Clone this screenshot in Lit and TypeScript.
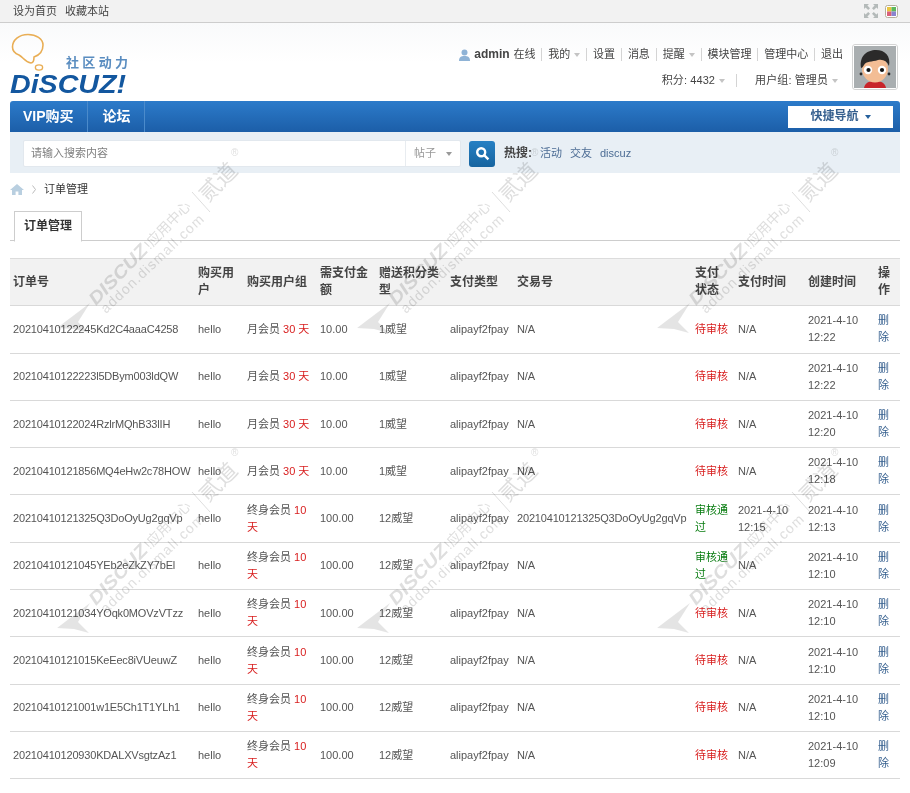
import { LitElement, html, css, svg } from "lit";
import { customElement } from "lit/decorators.js";

interface Row { id: string; group: string; days: string; pay: string; gift: string; trade: string; ok: boolean; paid: string; made: string; }

const rows: Row[] = [
  { id: "20210410122245Kd2C4aaaC4258", group: "月会员", days: "30 天", pay: "10.00", gift: "1威望", trade: "N/A", ok: false, paid: "N/A", made: "2021-4-10 12:22" },
  { id: "20210410122223l5DBym003ldQW", group: "月会员", days: "30 天", pay: "10.00", gift: "1威望", trade: "N/A", ok: false, paid: "N/A", made: "2021-4-10 12:22" },
  { id: "20210410122024RzlrMQhB33lIH", group: "月会员", days: "30 天", pay: "10.00", gift: "1威望", trade: "N/A", ok: false, paid: "N/A", made: "2021-4-10 12:20" },
  { id: "20210410121856MQ4eHw2c78HOW", group: "月会员", days: "30 天", pay: "10.00", gift: "1威望", trade: "N/A", ok: false, paid: "N/A", made: "2021-4-10 12:18" },
  { id: "20210410121325Q3DoOyUg2gqVp", group: "终身会员", days: "10 天", pay: "100.00", gift: "12威望", trade: "20210410121325Q3DoOyUg2gqVp", ok: true, paid: "2021-4-10 12:15", made: "2021-4-10 12:13" },
  { id: "20210410121045YEb2eZkZY7bEl", group: "终身会员", days: "10 天", pay: "100.00", gift: "12威望", trade: "N/A", ok: true, paid: "N/A", made: "2021-4-10 12:10" },
  { id: "20210410121034YOqk0MOVzVTzz", group: "终身会员", days: "10 天", pay: "100.00", gift: "12威望", trade: "N/A", ok: false, paid: "N/A", made: "2021-4-10 12:10" },
  { id: "20210410121015KeEec8iVUeuwZ", group: "终身会员", days: "10 天", pay: "100.00", gift: "12威望", trade: "N/A", ok: false, paid: "N/A", made: "2021-4-10 12:10" },
  { id: "20210410121001w1E5Ch1T1YLh1", group: "终身会员", days: "10 天", pay: "100.00", gift: "12威望", trade: "N/A", ok: false, paid: "N/A", made: "2021-4-10 12:10" },
  { id: "20210410120930KDALXVsgtzAz1", group: "终身会员", days: "10 天", pay: "100.00", gift: "12威望", trade: "N/A", ok: false, paid: "N/A", made: "2021-4-10 12:09" },
];

const widths = [185, 49, 73, 59, 71, 67, 178, 43, 70, 70, 25];

const tile = svg`
  <g class="wm">
    <polygon points="57,328 90,303 78,322 89,333 74,329"></polygon>
    <text class="wm-a" transform="translate(96,306) rotate(-46)" textLength="76" lengthAdjust="spacingAndGlyphs">DISCUZ</text>
    <text class="wm-b" transform="translate(150,250) rotate(-46)">!应用中心</text>
    <text class="wm-c" transform="translate(106,314) rotate(-43.5)">addon.dismall.com</text>
    <line x1="192" y1="192" x2="210" y2="212"></line>
    <text class="wm-d" transform="translate(208,203) rotate(-45)">贰道</text>
    <text class="wm-r" x="231" y="156">®</text>
  </g>`;

@customElement("app-root")
export class AppRoot extends LitElement {
  static styles = css`
    :host { display: block; position: relative; width: 910px; min-height: 793px; background: #fff; overflow: hidden;
      font: 11px/17px "Liberation Sans", "Noto Sans CJK SC", sans-serif; color: #444; }
    a { color: inherit; text-decoration: none; }
    .top { height: 22px; background: #f2f2f2; border-bottom: 1px solid #cdcdcd; padding: 0 10px 0 13px;
      display: flex; align-items: center; gap: 8px; color: #444; box-sizing: content-box; }
    .top .icons { margin-left: auto; display: flex; align-items: center; gap: 7px; padding-right: 2px; }
    .head { height: 78px; display: flex; justify-content: space-between; padding: 0 12px 0 10px;
      background: linear-gradient(#f9fafb, #fff 40px); }
    .logo { display: block; margin-top: 10px; }
    .user { display: flex; gap: 9px; align-items: flex-start; padding-top: 21px; }
    .links { display: flex; flex-direction: column; align-items: flex-end; }
    .line1 { display: flex; align-items: center; gap: 5.9px; height: 21px; color: #444; }
    .line2 { display: flex; align-items: center; height: 21px; padding-top: 5px; margin-right: 5px; color: #444; letter-spacing: .1px; }
    .line1 b { color: #444; font-size: 12px; margin-left: -2px; margin-right: -2px; }
    .sep { width: 1px; height: 13px; background: #d4d4d4; }
    .line2 .sep { margin: 0 18px 0 11px; }
    .caret { display: inline-block; width: 0; height: 0; border: 3px solid transparent; border-top: 4px solid #c4c4c4; border-bottom: 0; margin-left: 4px; }
    .has { display: flex; align-items: center; }
    .avatar { display: block; width: 46px; height: 46px; border: 1px solid #d4d4d4; border-radius: 3px; background: #fff; padding: 1px; box-sizing: border-box; }
    .nav { margin: 0 10px; height: 31px; border-radius: 3px 3px 0 0; background: linear-gradient(#2c7bca, #1c5ea8);
      display: flex; align-items: center; color: #fff; font-weight: bold; font-size: 14px; position: relative; }
    .nav a { height: 100%; display: flex; align-items: center; border-right: 1px solid #4b8bcb; }
    .nav .vip { padding: 0 13px; }
    .nav .forum { padding: 0 13px 0 15px; }
    .quick { margin-left: auto; margin-right: 7px; width: 105px; height: 22px; background: #fff; color: #36608f; font-size: 12px;
      display: flex; align-items: center; justify-content: center; gap: 6px; }
    .quick i { width: 0; height: 0; border: 3.5px solid transparent; border-top: 4px solid #26609c; border-bottom: 0; }
    .search { margin: 0 10px; height: 41px; box-sizing: border-box; padding: 2px 0 0 13px; background: #e8eff5; display: flex; align-items: center; }
    .box { width: 438px; height: 27px; background: #fff; border: 1px solid #e2e8ee; box-sizing: border-box; border-radius: 2px;
      display: flex; align-items: center; color: #808080; }
    .box .ph { flex: 1; padding-left: 7px; }
    .box .sel { width: 55px; height: 100%; border-left: 1px solid #e8ecf0; display: flex; align-items: center; padding-left: 8px; box-sizing: border-box; color: #999; gap: 10px; }
    .box .sel i { width: 0; height: 0; border: 3px solid transparent; border-top: 4px solid #999; border-bottom: 0; }
    .go { width: 26px; height: 26px; margin-left: 8px; border-radius: 3px; background: linear-gradient(#2680c4, #17649f); display: flex; align-items: center; justify-content: center; }
    .hot { margin-left: 9px; display: flex; gap: 8px; color: #4d6d95; }
    .hot b { color: #444; font-size: 12px; }
    .crumb { height: 32px; padding: 0 10px; display: flex; align-items: center; color: #333; }
    .crumb .chev { margin: 0 8px; display: block; }
    .tabs { margin: 6px 10px 0; border-bottom: 1px solid #cdcdcd; padding-left: 4px; box-sizing: content-box; height: 29px; }
    .tab { display: inline-flex; align-items: center; justify-content: center; width: 66px; height: 29px; background: #fff; border: 1px solid #cdcdcd; border-bottom: 1px solid #fff;
      font-weight: bold; font-size: 12px; color: #333; position: relative; }
    table { margin: 17px 10px 0; width: 890px; border-collapse: collapse; table-layout: fixed; position: relative; }
    th, td { padding: 0 3px; text-align: left; vertical-align: middle; border-bottom: 1px solid #d9d9d9; font-weight: normal; }
    thead th { height: 46.3px; background: #f2f2f2; border-top: 1px solid #dcdcdc; font-weight: bold; font-size: 12px; color: #444; }
    tbody td { height: 46.3px; color: #555; }
    .nw { white-space: nowrap; }
    .code { letter-spacing: -.18px; }
    .red { color: #d81e1e; }
    .green { color: #0a7d12; }
    .link { color: #36608f; }
    .overlay { position: absolute; left: 0; top: 0; width: 910px; height: 793px; pointer-events: none; opacity: .8; mix-blend-mode: multiply; }
    .wm polygon { fill: #dedede; }
    .wm text { fill: #d6d6d6; font-family: "Liberation Sans", "Noto Sans CJK SC", sans-serif; }
    .wm .wm-a { font-size: 18px; font-weight: bold; font-style: italic; }
    .wm .wm-b { font-size: 14px; }
    .wm .wm-c { font-size: 14px; letter-spacing: 1.2px; }
    .wm .wm-d { font-size: 22px; }
    .wm .wm-r { font-size: 10px; }
    .wm line { stroke: #d6d6d6; stroke-width: 1; }
  `;

  private logo() {
    return html`<svg class="logo" width="122" height="66" viewBox="0 0 122 66">
      <path d="M18 1.500 C9 1.500 2.500 7 2.500 14 C2.500 19 6 21 9 22 C13 24 15 29 21 30 C24 30 24 27 24 24 C30 22 33 17 33 12 C33 5.500 26 1.500 18 1.500 Z" fill="none" stroke="#e9ae55" stroke-width="1.6"></path>
      <ellipse cx="29" cy="34.500" rx="3.600" ry="2.600" fill="none" stroke="#e9ae55" stroke-width="1.400"></ellipse>
      <text x="56" y="34" font-size="13" font-weight="bold" fill="#5a8dc0" textLength="62" lengthAdjust="spacing" font-family="Noto Sans CJK SC">社区动力</text>
      <text x="0" y="60" font-size="26" font-weight="bold" font-style="italic" fill="#13579f" textLength="116" lengthAdjust="spacingAndGlyphs" font-family="Liberation Sans">DiSCUZ!</text>
    </svg>`;
  }

  private face() {
    return html`<svg width="42" height="42" viewBox="0 0 42 42">
      <rect width="42" height="42" fill="#a9aeb0"></rect>
      <path d="M10 42 C11 36 16 35 21 35 C26 35 31 36 32 42 Z" fill="#c8242a"></path>
      <ellipse cx="21" cy="23" rx="13" ry="13.500" fill="#f3bd95"></ellipse>
      <path d="M7 22 C5 10 13 4 22 4 C31 4 37 10 35 20 C33 15 29 13 24 14 C18 16 12 15 10 19 C9 21 8 22 7 22 Z" fill="#2b2a2a"></path>
      <circle cx="14" cy="24" r="4.200" fill="#fff"></circle><circle cx="28" cy="24" r="4.200" fill="#fff"></circle>
      <circle cx="14.500" cy="24" r="2.100" fill="#111"></circle><circle cx="28" cy="24" r="2.100" fill="#111"></circle>
      <circle cx="7" cy="28" r="1.400" fill="#2b2a2a"></circle><circle cx="35" cy="28" r="1.400" fill="#2b2a2a"></circle>
    </svg>`;
  }

  render() {
    return html`
      <div class="top">
        <a>设为首页</a><a>收藏本站</a>
        <span class="icons">
          <svg width="14" height="14" viewBox="0 0 14 14" fill="#b4bab9">
            <path d="M0 0h5L3.400 1.600 6 4.200 4.200 6 1.600 3.400 0 5zM14 0v5L12.400 3.400 9.800 6 8 4.200 10.600 1.600 9 0zM0 14V9l1.600 1.600L4.200 8 6 9.800 3.400 12.400 5 14zM14 14H9l1.600-1.600L8 9.800 9.800 8l2.600 2.600L14 9z"></path>
          </svg>
          <svg width="13" height="13" viewBox="0 0 13 13">
            <rect x=".5" y=".5" width="12" height="12" rx="2" fill="#fff" stroke="#b5ae9c"></rect>
            <rect x="2" y="2" width="4.500" height="4.500" fill="#e9c53f"></rect><rect x="6.500" y="2" width="4.500" height="4.500" fill="#5cb85c"></rect>
            <rect x="2" y="6.500" width="4.500" height="4.500" fill="#d9607a"></rect><rect x="6.500" y="6.500" width="4.500" height="4.500" fill="#8a83cf"></rect>
          </svg>
        </span>
      </div>
      <div class="head">
        ${this.logo()}
        <div class="user">
          <div class="links">
            <div class="line1">
              <svg width="11" height="12" viewBox="0 0 11 12" fill="#8fb3d6"><circle cx="5.500" cy="3.500" r="3"></circle><path d="M0 12c0-4 2-5 5.500-5S11 8 11 12z"></path></svg>
              <b>admin</b><span>在线</span><i class="sep"></i>
              <span class="has">我的<i class="caret"></i></span><i class="sep"></i>
              <span>设置</span><i class="sep"></i>
              <span>消息</span><i class="sep"></i>
              <span class="has">提醒<i class="caret"></i></span><i class="sep"></i>
              <span>模块管理</span><i class="sep"></i>
              <span>管理中心</span><i class="sep"></i>
              <span>退出</span>
            </div>
            <div class="line2">
              <span class="has">积分: 4432<i class="caret"></i></span><i class="sep"></i>
              <span class="has">用户组: 管理员<i class="caret"></i></span>
            </div>
          </div>
          <span class="avatar">${this.face()}</span>
        </div>
      </div>
      <div class="nav">
        <a class="vip">VIP购买</a><a class="forum">论坛</a>
        <div class="quick">快捷导航<i></i></div>
      </div>
      <div class="search">
        <div class="box"><span class="ph">请输入搜索内容</span><span class="sel">帖子<i></i></span></div>
        <div class="go"><svg width="15" height="15" viewBox="0 0 15 15" fill="none" stroke="#fff" stroke-width="2.400"><circle cx="6.200" cy="6.200" r="4"></circle><path d="M9.400 9.400l4 4"></path></svg></div>
        <div class="hot"><b>热搜:</b><a>活动</a><a>交友</a><a>discuz</a></div>
      </div>
      <div class="crumb">
        <svg width="14" height="11" viewBox="0 0 14 11" fill="#b9cfe0"><path d="M7 0L0 6h2v5h3.600V7.500h2.800V11H12V6h2z"></path></svg>
        <svg class="chev" width="4" height="9" viewBox="0 0 4 9" fill="none" stroke="#bbb"><path d="M.5.5l3 4-3 4"></path></svg>
        <span>订单管理</span>
      </div>
      <div class="tabs"><span class="tab">订单管理</span></div>
      <table>
        <colgroup>${widths.map((w) => html`<col width=${w} />`)}</colgroup>
        <thead>
          <tr>
            <th>订单号</th><th>购买用<br />户</th><th>购买用户组</th><th>需支付金<br />额</th><th>赠送积分类<br />型</th>
            <th>支付类型</th><th>交易号</th><th>支付<br />状态</th><th class="nw">支付时间</th><th class="nw">创建时间</th><th>操<br />作</th>
          </tr>
        </thead>
        <tbody>
          ${rows.map((r) => html`<tr>
            <td class="nw code">${r.id}</td><td>hello</td>
            <td>${r.group} <span class="red">${r.days}</span></td>
            <td>${r.pay}</td><td>${r.gift}</td><td class="nw">alipayf2fpay</td>
            <td class="nw code">${r.trade}</td>
            <td class=${r.ok ? "green" : "red"}>${r.ok ? "审核通过" : "待审核"}</td>
            <td>${r.paid}</td><td>${r.made}</td>
            <td><a class="link">删除</a></td>
          </tr>`)}
        </tbody>
      </table>
      <svg class="overlay" width="910" height="793" viewBox="0 0 910 793">
        ${[0, 300].map((y) => [0, 300, 600].map((x) => svg`<g transform="translate(${x},${y})">${tile}</g>`))}
      </svg>
    `;
  }
}
